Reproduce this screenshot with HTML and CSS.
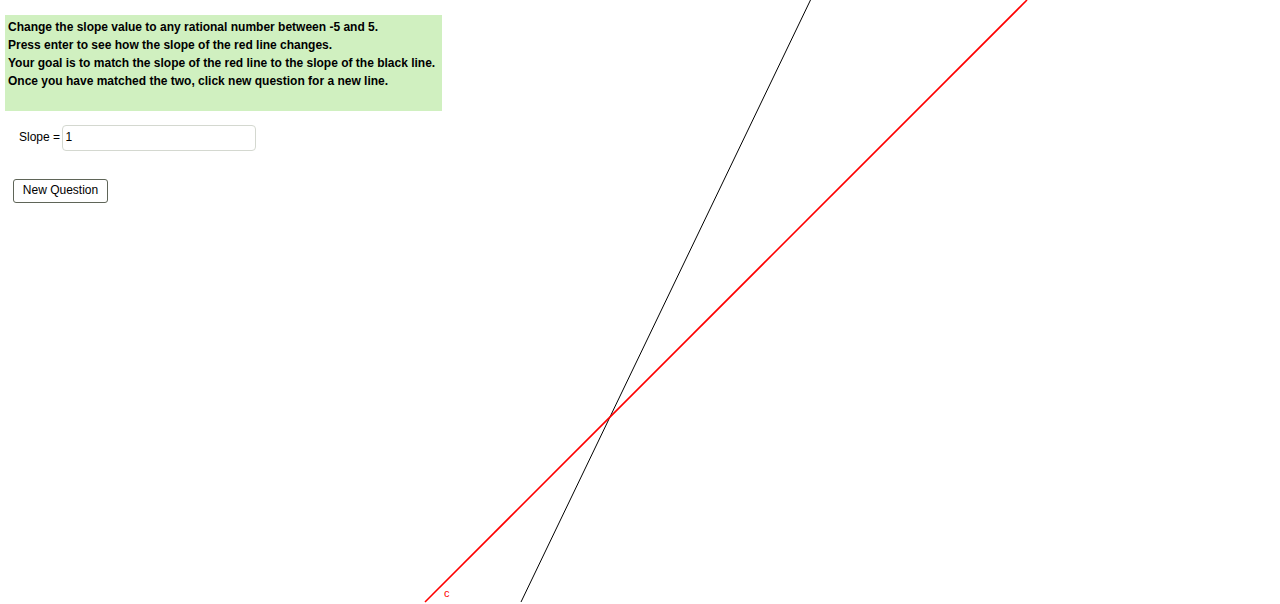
FILE: index.html
```html
<!DOCTYPE html>
<html>
<head>
<meta charset="utf-8">
<link rel="stylesheet" href="styles.css">
</head>
<body>
<div class="applet">
  <svg class="graph" width="1280" height="604" viewBox="0 0 1280 604">
    <line x1="810.5" y1="0" x2="521" y2="602" stroke="#000" stroke-width="1"/>
    <line x1="1027" y1="0" x2="425" y2="602" stroke="#ff0000" stroke-width="1.6"/>
    <text x="444" y="597" class="lbl">c</text>
  </svg>
  <div class="panel">
    <div class="info">
      <p>Change the slope value to any rational number between -5 and 5.</p>
      <p>Press enter to see how the slope of the red line changes.</p>
      <p>Your goal is to match the slope of the red line to the slope of the black line.</p>
      <p>Once you have matched the two, click new question for a new line.</p>
    </div>
    <div class="slope-row">
      <span class="slope-label">Slope = </span>
      <div class="slope-input">1</div>
    </div>
    <button class="btn">New Question</button>
  </div>
</div>
</body>
</html>
```
FILE: styles.css
```css
html, body {
  margin: 0;
  padding: 0;
  background: #fff;
  font-family: "Liberation Sans", Arial, sans-serif;
}
.applet {
  position: relative;
  width: 1280px;
  height: 604px;
  overflow: hidden;
}
.graph {
  position: absolute;
  left: 0;
  top: 0;
}
.lbl {
  fill: #ff0000;
  font-family: "Liberation Sans", Arial, sans-serif;
  font-size: 11px;
}
.panel {
  position: relative;
  padding-top: 15px;
  padding-left: 5px;
}
.info {
  height: 96px;
  background: #d0f0c0;
  padding: 3px 0 0 3px;
  box-sizing: border-box;
  width: 437px;
}
.info p {
  margin: 0;
  font-size: 12px;
  font-weight: bold;
  line-height: 18px;
  color: #000;
}
.slope-row {
  display: flex;
  align-items: center;
  margin-top: 14px;
  margin-left: 14px;
  height: 26px;
}
.slope-label {
  font-size: 12px;
  color: #000;
  white-space: pre;
  margin-right: -1px;
  position: relative;
  top: -1px;
}
.slope-input {
  width: 194px;
  height: 26px;
  box-sizing: border-box;
  border: 1px solid #d4d8d0;
  border-radius: 4px;
  font-size: 12px;
  line-height: 22px;
  padding-left: 2px;
  background: #fff;
}
.btn {
  display: block;
  margin-top: 28px;
  margin-left: 8px;
  width: 95px;
  height: 24px;
  box-sizing: border-box;
  border: 1px solid #5f6558;
  border-radius: 3px;
  background: #fff;
  font-family: "Liberation Sans", Arial, sans-serif;
  font-size: 12px;
  line-height: 20px;
  color: #000;
  padding: 0 0 2px 0;
}
```
